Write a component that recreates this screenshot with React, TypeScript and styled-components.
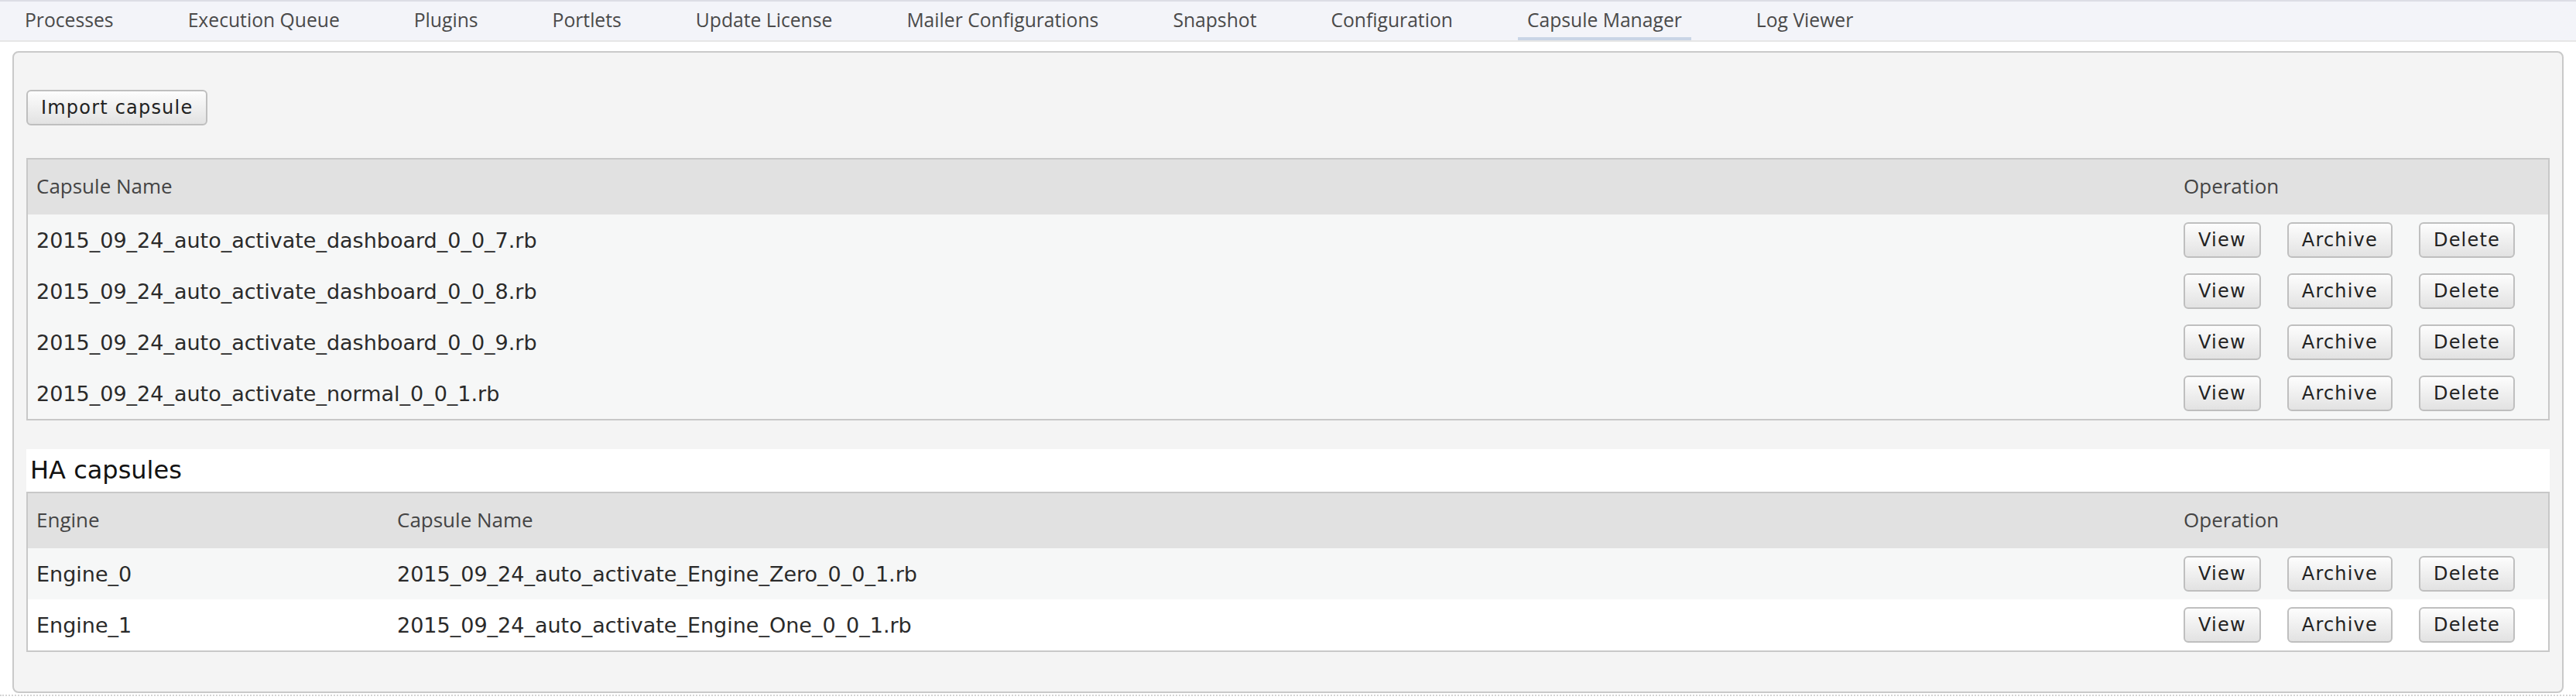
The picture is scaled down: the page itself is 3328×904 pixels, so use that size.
import React from 'react';
import styled, { createGlobalStyle } from 'styled-components';

const GlobalStyle = createGlobalStyle`
  html, body {
    margin: 0;
    padding: 0;
    background: #ffffff;
  }
  body {
    font-family: "DejaVu Sans", "Liberation Sans", sans-serif;
  }
`;

const tabs = [
  'Processes',
  'Execution Queue',
  'Plugins',
  'Portlets',
  'Update License',
  'Mailer Configurations',
  'Snapshot',
  'Configuration',
  'Capsule Manager',
  'Log Viewer',
];

const capsules = [
  '2015_09_24_auto_activate_dashboard_0_0_7.rb',
  '2015_09_24_auto_activate_dashboard_0_0_8.rb',
  '2015_09_24_auto_activate_dashboard_0_0_9.rb',
  '2015_09_24_auto_activate_normal_0_0_1.rb',
];

const haCapsules = [
  { engine: 'Engine_0', name: '2015_09_24_auto_activate_Engine_Zero_0_0_1.rb' },
  { engine: 'Engine_1', name: '2015_09_24_auto_activate_Engine_One_0_0_1.rb' },
];

const MAIN_COLS = '1fr 482px';
const HA_COLS = '466px 1fr 482px';

function Operations() {
  return (
    <Ops>
      <Button>View</Button>
      <Button>Archive</Button>
      <Button>Delete</Button>
    </Ops>
  );
}

function App() {
  return (
    <Page>
      <GlobalStyle />
      <TabBar>
        {tabs.map((t) => (
          <Tab key={t} $active={t === 'Capsule Manager'}>
            {t}
          </Tab>
        ))}
      </TabBar>

      <Panel>
        <Toolbar>
          <Button>Import capsule</Button>
        </Toolbar>

        <Table>
          <HeadRow $cols={MAIN_COLS}>
            <HeadCell>Capsule Name</HeadCell>
            <HeadCell>Operation</HeadCell>
          </HeadRow>
          {capsules.map((c) => (
            <Row key={c} $cols={MAIN_COLS} $bg="#f6f7f7">
              <TextCell>{c}</TextCell>
              <Cell>
                <Operations />
              </Cell>
            </Row>
          ))}
        </Table>

        <SectionTitle>HA capsules</SectionTitle>
        <Table>
          <HeadRow $cols={HA_COLS}>
            <HeadCell>Engine</HeadCell>
            <HeadCell>Capsule Name</HeadCell>
            <HeadCell>Operation</HeadCell>
          </HeadRow>
          {haCapsules.map((c, i) => (
            <Row key={c.name} $cols={HA_COLS} $bg={i % 2 === 0 ? '#f6f7f7' : '#ffffff'}>
              <TextCell>{c.engine}</TextCell>
              <TextCell>{c.name}</TextCell>
              <Cell>
                <Operations />
              </Cell>
            </Row>
          ))}
        </Table>
      </Panel>
      <Footer />
    </Page>
  );
}

const Page = styled.div`
  width: 100%;
`;

const TabBar = styled.div`
  display: flex;
  align-items: stretch;
  height: 50px;
  padding-left: 20px;
  background: #f3f4f9;
  border-top: 2px solid #dcdde5;
  border-bottom: 2px solid #e6e6e6;
`;

const Tab = styled.div<{ $active?: boolean }>`
  box-sizing: border-box;
  height: 50px;
  padding: 1px 12px 0;
  margin-right: 72px;
  line-height: 45px;
  font-family: "Open Sans", "DejaVu Sans", sans-serif;
  font-size: 24.7px;
  color: #4a4a4a;
  white-space: nowrap;
  border-bottom: 4px solid ${(p) => (p.$active ? '#c9d5e6' : 'transparent')};
  cursor: pointer;
`;

const Panel = styled.div`
  margin: 12px 16px 0;
  padding: 48px 16px 51px;
  background: #f4f4f4;
  border: 2px solid #c9c9c9;
  border-radius: 8px;
`;

const Toolbar = styled.div`
  display: flex;
  margin-bottom: 42px;
`;

const Button = styled.button`
  box-sizing: border-box;
  height: 46px;
  padding: 0 17px;
  font-family: "DejaVu Sans", "Liberation Sans", sans-serif;
  font-size: 24px;
  letter-spacing: 1.2px;
  color: #222222;
  background: linear-gradient(#fdfdfd, #e2e2e2);
  border: 2px solid #bfbfbf;
  border-radius: 6px;
  cursor: pointer;
`;

const Table = styled.div`
  border: 2px solid #c8c8c8;
`;

const HeadRow = styled.div<{ $cols: string }>`
  display: grid;
  grid-template-columns: ${(p) => p.$cols};
  align-items: center;
  height: 71px;
  background: #e1e1e1;
`;

const Row = styled.div<{ $cols: string; $bg: string }>`
  display: grid;
  grid-template-columns: ${(p) => p.$cols};
  align-items: center;
  height: 66px;
  background: ${(p) => p.$bg};
`;

const Cell = styled.div`
  padding: 0 11px;
`;

const HeadCell = styled(Cell)`
  font-family: "Open Sans", "DejaVu Sans", sans-serif;
  font-size: 26px;
  color: #444444;
  padding-bottom: 3px;
`;

const TextCell = styled(Cell)`
  font-size: 27px;
  color: #2a2a2a;
  padding-top: 1px;
  white-space: nowrap;
`;

const Ops = styled.div`
  display: flex;
  gap: 34px;
`;

const SectionTitle = styled.div`
  margin-top: 37px;
  height: 55px;
  line-height: 55px;
  padding-left: 5px;
  background: #ffffff;
  font-size: 32px;
  color: #121212;
`;

const Footer = styled.div`
  margin-top: 2px;
  border-top: 2px dotted #d4d4d4;
`;

export default App;
